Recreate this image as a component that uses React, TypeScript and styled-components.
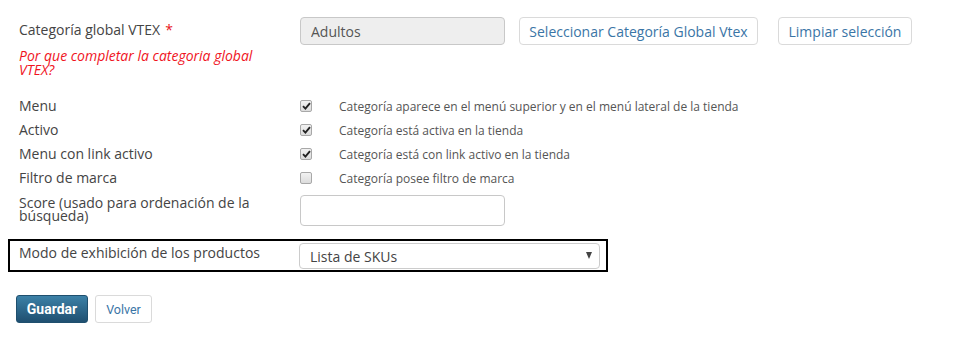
import React from "react";
import styled, { createGlobalStyle } from "styled-components";

const FONT = `"Open Sans", "Noto Sans", sans-serif`;

const Global = createGlobalStyle`
  html, body { margin: 0; padding: 0; background: #fff; }
  body { font-family: ${FONT}; color: #444; }
  * { box-sizing: border-box; }
`;

const Page = styled.div`
  width: 973px;
  padding-top: 17px;
`;

const Row = styled.div<{ $mt?: number }>`
  display: grid;
  grid-template-columns: 281px 1fr;
  align-items: start;
  padding-left: 19px;
  margin-top: ${(p) => p.$mt ?? 0}px;
`;

const CheckRow = styled(Row)`
  height: 24px;
  align-items: center;
`;

const Highlight = styled.div`
  display: grid;
  grid-template-columns: 280px 301px;
  align-items: start;
  margin: 13px 0 0 8px;
  width: 600px;
  border: 2px solid #000;
  padding: 2px 0 1px 9px;
`;

const LabelCol = styled.div`
  display: flex;
  flex-direction: column;
`;

const Label = styled.div<{ $mt?: number }>`
  font-size: 14px;
  line-height: 20px;
  color: #444;
  white-space: nowrap;
  margin-top: ${(p) => p.$mt ?? 0}px;
`;

const MultiLabel = styled.div`
  font-size: 14px;
  line-height: 13px;
  color: #444;
  padding-top: 1px;
  padding-right: 20px;
`;

const Required = styled.span`
  color: #e8141c;
  margin-left: 5px;
`;

const Hint = styled.a`
  display: block;
  width: 262px;
  margin-top: 9px;
  font-size: 14px;
  line-height: 14px;
  font-style: italic;
  color: #f0141e;
`;

const FieldLine = styled.div`
  display: flex;
  align-items: center;
`;

const TextInput = styled.input<{ $h?: number }>`
  width: 205px;
  height: ${(p) => p.$h ?? 28}px;
  border: 1px solid #c8c8c8;
  border-radius: 4px;
  padding: 0 10px;
  font-family: ${FONT};
  font-size: 14px;
  color: #555;
  background: #fff;
  &:read-only { background: #eee; }
`;

const LinkButton = styled.button<{ $ml: number; $w: number }>`
  margin-left: ${(p) => p.$ml}px;
  width: ${(p) => p.$w}px;
  height: 28px;
  border: 1px solid #dadada;
  border-radius: 4px;
  background: #fff;
  color: #3a75a6;
  font-family: ${FONT};
  font-size: 14px;
  padding: 0;
  white-space: nowrap;
`;

const Box = styled.span`
  display: inline-flex;
  align-items: center;
  justify-content: center;
  width: 12px;
  height: 12px;
  border: 1px solid #a8a8a8;
  border-radius: 2px;
  background: linear-gradient(#f2f2f2, #dcdcdc);
  flex: none;
`;

const Desc = styled.span`
  margin-left: 27px;
  font-size: 12px;
  color: #555;
  white-space: nowrap;
`;

const Select = styled.div`
  position: relative;
  width: 301px;
  height: 26px;
  border: 1px solid #ccc;
  border-radius: 4px;
  font-size: 14px;
  color: #444;
  display: flex;
  align-items: center;
  padding-left: 10px;
`;

const Arrow = styled.span`
  position: absolute;
  right: 7px;
  top: 8px;
  width: 0;
  height: 0;
  border-left: 3px solid transparent;
  border-right: 3px solid transparent;
  border-top: 7px solid #444;
`;

const Actions = styled.div`
  display: flex;
  gap: 7px;
  margin-top: 23px;
  padding-left: 16px;
`;

const Primary = styled.button`
  width: 72px;
  height: 28px;
  border: 1px solid #1f4f6e;
  border-radius: 3px;
  background: linear-gradient(#3c81a7, #1f4f70);
  color: #fff;
  font-family: Roboto, sans-serif;
  font-weight: bold;
  font-size: 14px;
  padding: 0;
`;

const Secondary = styled.button`
  width: 57px;
  height: 28px;
  border: 1px solid #dadada;
  border-radius: 3px;
  background: #fff;
  color: #3a75a6;
  font-family: Roboto, sans-serif;
  font-size: 12.5px;
  padding: 0;
`;

function Check({ on }: { on: boolean }) {
  return (
    <Box>
      {on && (
        <svg width="9" height="8" viewBox="0 0 9 8">
          <path d="M1 4.2 L3.4 6.6 L8 1.2" stroke="#222" strokeWidth="1.9" fill="none" />
        </svg>
      )}
    </Box>
  );
}

const checks = [
  { label: "Menu", on: true, desc: "Categoría aparece en el menú superior y en el menú lateral de la tienda" },
  { label: "Activo", on: true, desc: "Categoría está activa en la tienda" },
  { label: "Menu con link activo", on: true, desc: "Categoría está con link activo en la tienda" },
  { label: "Filtro de marca", on: false, desc: "Categoría posee filtro de marca" },
];

export default function App() {
  return (
    <>
      <Global />
      <Page>
        <Row>
          <LabelCol>
            <Label $mt={3}>
              Categoría global VTEX<Required>*</Required>
            </Label>
            <Hint>Por que completar la categoria global VTEX?</Hint>
          </LabelCol>
          <FieldLine>
            <TextInput readOnly value="Adultos" />
            <LinkButton $ml={14} $w={239}>Seleccionar Categoría Global Vtex</LinkButton>
            <LinkButton $ml={20} $w={134}>Limpiar selección</LinkButton>
          </FieldLine>
        </Row>
        <div style={{ height: 17 }} />
        {checks.map((c) => (
          <CheckRow key={c.label}>
            <Label>{c.label}</Label>
            <FieldLine>
              <Check on={c.on} />
              <Desc>{c.desc}</Desc>
            </FieldLine>
          </CheckRow>
        ))}
        <Row $mt={5}>
          <MultiLabel>Score (usado para ordenación de la búsqueda)</MultiLabel>
          <TextInput $h={31} defaultValue="" />
        </Row>
        <Highlight>
          <Label $mt={0}>Modo de exhibición de los productos</Label>
          <Select>
            Lista de SKUs
            <Arrow />
          </Select>
        </Highlight>
        <Actions>
          <Primary>Guardar</Primary>
          <Secondary>Volver</Secondary>
        </Actions>
      </Page>
    </>
  );
}
